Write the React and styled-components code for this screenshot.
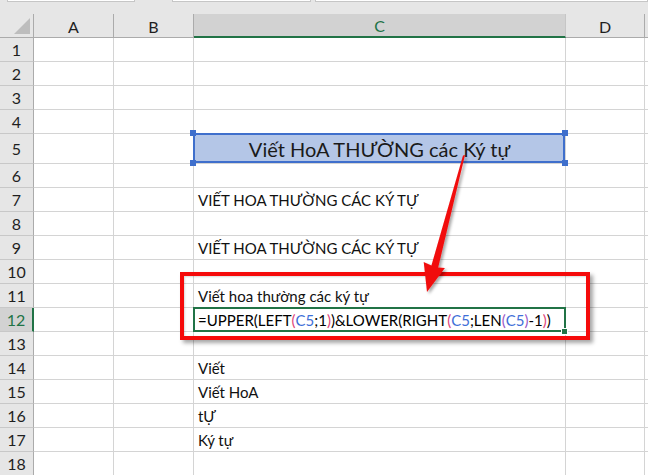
import React from "react";
import styled, { createGlobalStyle, css } from "styled-components";

const GlobalStyle = createGlobalStyle`
  html, body {
    margin: 0;
    padding: 0;
    background: #fff;
  }
  body {
    font-family: Lato, "Open Sans", "Liberation Sans", sans-serif;
  }
`;

const GREEN = "#217346";
const GRID = "#d4d4d4";

const COLS = ["A", "B", "C", "D", ""];
const ROW_HEIGHTS = { 5: 30 };

// nội dung cột C
const ROWS = {
  5: { text: "Viết HoA THƯỜNG các Ký tự", title: true },
  7: { text: "VIẾT HOA THƯỜNG CÁC KÝ TỰ" },
  9: { text: "VIẾT HOA THƯỜNG CÁC KÝ TỰ" },
  11: { text: "Viết hoa thường các ký tự" },
  12: { formula: true },
  14: { text: "Viết" },
  15: { text: "Viết HoA" },
  16: { text: "tỰ" },
  17: { text: "Ký tự" },
};

const FORMULA = [
  ["=UPPER(LEFT", "#000"],
  ["(", "#e0457b"],
  ["C5", "#3f6fd8"],
  [";1", "#000"],
  [")", "#e0457b"],
  [")&LOWER(RIGHT", "#000"],
  ["(", "#e0457b"],
  ["C5", "#3f6fd8"],
  [";LEN", "#000"],
  ["(", "#9a57c9"],
  ["C5", "#3f6fd8"],
  [")", "#9a57c9"],
  ["-1", "#000"],
  [")", "#e0457b"],
  [")", "#000"],
];

export default function App() {
  const rows = Array.from({ length: 18 }, (_, i) => i + 1);
  return (
    <>
      <GlobalStyle />
      <Sheet>
        <TopStrip>
          <BarStub $width={126} />
          <BarStub $width={137} />
          <BarStub $grow />
        </TopStrip>

        <Grid $rows={rows.map((r) => ROW_HEIGHTS[r] || 24)}>
          <Corner>
            <CornerTriangle />
          </Corner>
          {COLS.map((c) => (
            <ColHeader key={c || "E"} $active={c === "C"}>
              {c}
            </ColHeader>
          ))}

          {rows.map((r) => {
            const data = ROWS[r];
            return (
              <React.Fragment key={r}>
                <RowHeader $active={r === 12}>{r}</RowHeader>
                <Cell />
                <Cell />
                <Cell
                  $title={data?.title}
                  $selected={r === 12}
                >
                  {data?.title && (
                    <>
                      <Handle $x="left" $y="top" />
                      <Handle $x="right" $y="top" />
                      <Handle $x="left" $y="bottom" />
                      <Handle $x="right" $y="bottom" />
                    </>
                  )}
                  {data?.text}
                  {data?.formula &&
                    FORMULA.map(([t, col], i) => (
                      <Token key={i} $color={col}>
                        {t}
                      </Token>
                    ))}
                  {r === 12 && <FillHandle />}
                </Cell>
                <Cell />
                <Cell />
              </React.Fragment>
            );
          })}
        </Grid>

        <RedFrame />
        <Arrow viewBox="0 0 100 180" width="100" height="180">
          <defs>
            <filter id="sh" x="-30%" y="-10%" width="160%" height="130%">
              <feDropShadow dx="2" dy="2" stdDeviation="1.5" floodColor="#000" floodOpacity="0.35" />
            </filter>
          </defs>
          <polygon
            filter="url(#sh)"
            fill="#f10c0c"
            points="65,15 63,15.5 31.4,125.6 23.7,122.1 27,152 44.9,127.9 38.2,127.4"
          />
        </Arrow>
      </Sheet>
    </>
  );
}

const Sheet = styled.div`
  position: relative;
  width: 648px;
  height: 475px;
  overflow: hidden;
  background: #fff;
`;

const TopStrip = styled.div`
  height: 14px;
  background: #e6e6e6;
  display: flex;
  align-items: flex-start;
  padding-left: 7px;
  box-sizing: border-box;
  & > :nth-child(2) {
    margin-left: 37px;
  }
  & > :nth-child(3) {
    margin-left: 4px;
  }
`;

const BarStub = styled.div`
  height: 1px;
  background: #fff;
  border: 1px solid #c6c6c6;
  border-top: none;
  width: ${(p) => (p.$width ? `${p.$width}px` : "auto")};
  ${(p) => p.$grow && "flex: 1;"}
`;

const Grid = styled.div`
  display: grid;
  grid-template-columns: 34px 80px 80px 372px 79px 1fr;
  grid-template-rows: 24px ${(p) => p.$rows.map((h) => `${h}px`).join(" ")};
`;

const headerBase = css`
  box-sizing: border-box;
  background: #e6e6e6;
  color: #1f1f1f;
  font-size: 16px;
  display: flex;
  align-items: center;
  justify-content: center;
`;

const Corner = styled.div`
  ${headerBase};
  position: relative;
  border-right: 1px solid #ababab;
  border-bottom: 1px solid #ababab;
`;

const CornerTriangle = styled.div`
  position: absolute;
  right: 3px;
  bottom: 3px;
  width: 0;
  height: 0;
  border-left: 16px solid transparent;
  border-bottom: 16px solid #bdbdbd;
`;

const ColHeader = styled.div`
  ${headerBase};
  padding-top: 1px;
  border-right: 1px solid #ababab;
  border-bottom: 1px solid #ababab;
  ${(p) =>
    p.$active &&
    css`
      background: #d2d2d2;
      color: ${GREEN};
      border-right-color: #c6c6c6;
      border-bottom: 2px solid ${GREEN};
    `}
`;

const RowHeader = styled.div`
  ${headerBase};
  border-right: 1px solid #ababab;
  border-bottom: 1px solid #c8c8c8;
  ${(p) =>
    p.$active &&
    css`
      background: #d2d2d2;
      color: ${GREEN};
      border-right: 2px solid ${GREEN};
    `}
`;

const Cell = styled.div`
  position: relative;
  box-sizing: border-box;
  border-right: 1px solid ${GRID};
  border-bottom: 1px solid ${GRID};
  padding: 0 4px 2px;
  display: flex;
  align-items: flex-end;
  font-size: 15px;
  line-height: 18px;
  color: #111;
  white-space: nowrap;

  ${(p) =>
    p.$title &&
    css`
      background: #b4c6e7;
      justify-content: center;
      font-size: 20px;
      line-height: 26px;
      padding-bottom: 1px;
      color: #1a1a1a;
      &::before {
        content: "";
        position: absolute;
        top: -1px;
        left: -1px;
        right: 0;
        bottom: 0;
        border: 2px solid #3f6fcc;
        pointer-events: none;
      }
    `}

  ${(p) =>
    p.$selected &&
    css`
      &::before {
        content: "";
        position: absolute;
        top: -1px;
        left: -1px;
        right: -1px;
        bottom: -1px;
        border: 2px solid ${GREEN};
        pointer-events: none;
      }
    `}
`;

const Handle = styled.span`
  position: absolute;
  width: 6px;
  height: 6px;
  background: #3f6fcc;
  z-index: 2;
  ${(p) => (p.$x === "left" ? "left: -4px;" : "right: -3px;")}
  ${(p) => (p.$y === "top" ? "top: -4px;" : "bottom: -3px;")}
`;

const FillHandle = styled.span`
  position: absolute;
  right: -3px;
  bottom: -4px;
  width: 5px;
  height: 5px;
  background: ${GREEN};
  border: 1px solid #fff;
  z-index: 2;
`;

const Token = styled.span`
  color: ${(p) => p.$color};
`;

const RedFrame = styled.div`
  position: absolute;
  left: 180px;
  top: 272px;
  width: 410px;
  height: 68px;
  box-sizing: border-box;
  border: 4px solid #f50a0a;
  box-shadow: 3px 3px 4px rgba(0, 0, 0, 0.35), inset 1px 1px 2px rgba(0, 0, 0, 0.15);
  pointer-events: none;
`;

const Arrow = styled.svg`
  position: absolute;
  left: 400px;
  top: 140px;
  overflow: visible;
  pointer-events: none;
`;
